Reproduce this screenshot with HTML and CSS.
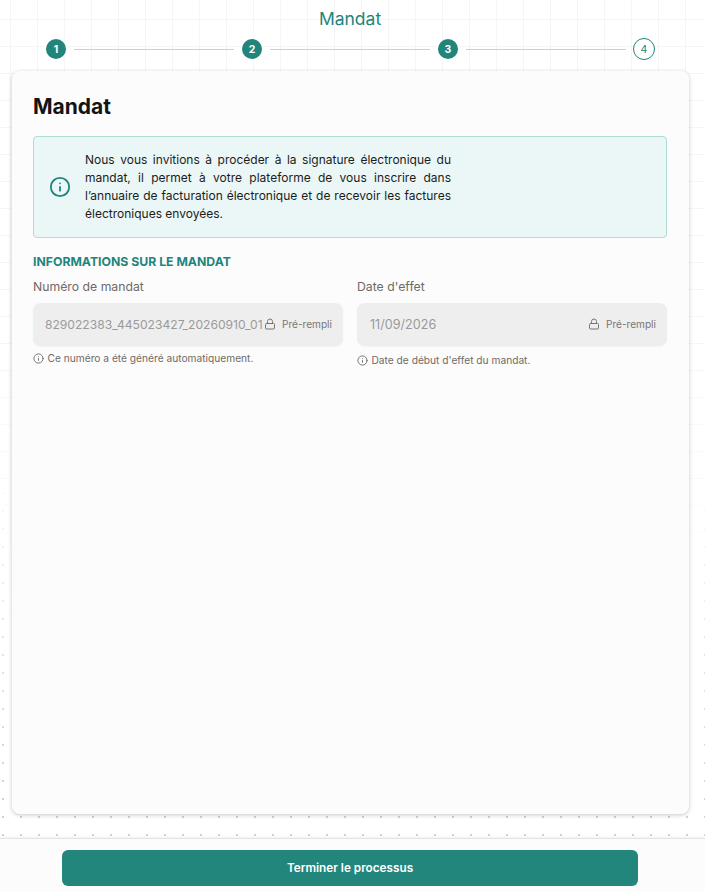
FILE: index.html
```html
<!DOCTYPE html>
<html lang="fr">
<head>
<meta charset="utf-8">
<title>Mandat</title>
<link rel="stylesheet" href="styles.css">
</head>
<body>
<div class="page">
  <div class="bg-grid"></div>
  <div class="bg-dots"></div>
  <header class="top">
    <div class="top-title">Mandat</div>
    <ol class="steps">
      <li class="step done">1</li>
      <li class="line"></li>
      <li class="step done">2</li>
      <li class="line"></li>
      <li class="step done">3</li>
      <li class="line"></li>
      <li class="step current">4</li>
    </ol>
  </header>
  <main class="card">
    <h1 class="card-title">Mandat</h1>
    <div class="notice">
      <svg class="notice-icon" viewBox="0 0 24 24" fill="none" stroke="currentColor" stroke-width="2" stroke-linecap="round"><circle cx="12" cy="12" r="10"/><path d="M12 16v-4M12 8h.01"/></svg>
      <p class="notice-text">Nous vous invitions à procéder à la signature électronique du mandat, il permet à votre plateforme de vous inscrire dans l’annuaire de facturation électronique et de recevoir les factures électroniques envoyées.</p>
    </div>
    <h2 class="section">INFORMATIONS SUR LE MANDAT</h2>
    <div class="fields">
      <div class="field">
        <label class="label">Numéro de mandat</label>
        <div class="input">
          <span class="value number">829022383_445023427_20260910_01</span>
          <span class="pre">
            <svg class="lock" viewBox="0 0 24 24" fill="none" stroke="currentColor" stroke-width="2" stroke-linecap="round" stroke-linejoin="round"><rect x="3" y="11" width="18" height="11" rx="2"/><path d="M7 11V7a5 5 0 0 1 10 0v4"/></svg>
            <span>Pré-rempli</span>
          </span>
        </div>
        <div class="help">
          <svg class="help-icon" viewBox="0 0 24 24" fill="none" stroke="currentColor" stroke-width="2" stroke-linecap="round"><circle cx="12" cy="12" r="10"/><path d="M12 16v-4M12 8h.01"/></svg>
          <span>Ce numéro a été généré automatiquement.</span>
        </div>
      </div>
      <div class="field">
        <label class="label">Date d'effet</label>
        <div class="input">
          <span class="value date">11/09/2026</span>
          <span class="pre">
            <svg class="lock" viewBox="0 0 24 24" fill="none" stroke="currentColor" stroke-width="2" stroke-linecap="round" stroke-linejoin="round"><rect x="3" y="11" width="18" height="11" rx="2"/><path d="M7 11V7a5 5 0 0 1 10 0v4"/></svg>
            <span>Pré-rempli</span>
          </span>
        </div>
        <div class="help help-low">
          <svg class="help-icon" viewBox="0 0 24 24" fill="none" stroke="currentColor" stroke-width="2" stroke-linecap="round"><circle cx="12" cy="12" r="10"/><path d="M12 16v-4M12 8h.01"/></svg>
          <span>Date de début d'effet du mandat.</span>
        </div>
      </div>
    </div>
  </main>
  <footer class="bottom">
    <button class="finish" type="button">Terminer le processus</button>
  </footer>
</div>
</body>
</html>
```

FILE: styles.css
```css
* { box-sizing: border-box; }
html, body { margin: 0; padding: 0; height: 100%; overflow: hidden; }
body { font-family: Inter, "Liberation Sans", sans-serif; background: #fff; color: #111; }
.page { position: relative; width: 705px; height: 892px; display: flex; flex-direction: column; overflow: hidden; }
.bg-grid {
  position: absolute; left: 0; top: 0; width: 100%; height: 640px;
  background-image: linear-gradient(to right, #f5f5f5 1px, transparent 1px), linear-gradient(to bottom, #f5f5f5 1px, transparent 1px);
  background-size: 27px 27px;
  background-position: 10px 19px;
  -webkit-mask-image: linear-gradient(to bottom, #000 0, #000 300px, transparent 630px);
  mask-image: linear-gradient(to bottom, #000 0, #000 300px, transparent 630px);
}
.bg-dots {
  position: absolute; left: 0; top: 440px; width: 100%; height: 452px;
  background-image: radial-gradient(circle at 1px 1px, #d2d2d2 1px, transparent 1.3px);
  background-size: 18px 18px;
  background-position: 2px 16px;
  -webkit-mask-image: linear-gradient(to bottom, transparent 0, #000 360px);
  mask-image: linear-gradient(to bottom, transparent 0, #000 360px);
}
.top { position: relative; height: 71px; flex: none; }
.top-title { width: 700px; text-align: center; color: #22857c; font-size: 17.5px; line-height: 20px; padding-top: 9px; }
.steps { list-style: none; margin: 9px 0 0; padding: 0 0 0 46px; display: flex; align-items: center; }
.step { width: 20px; height: 20px; border-radius: 50%; display: flex; align-items: center; justify-content: center; font-size: 10.5px; flex: none; }
.step.done { background: #22857c; color: #fff; font-weight: 700; }
.step.current { width: 22px; height: 22px; margin-left: -1px; background: #fff; border: 1px solid #22857c; color: #22857c; font-weight: 400; }
.line { flex: none; width: 160px; height: 1px; background: #cfcfcf; margin: 0 8px; }
.card {
  position: relative; margin: 0 16px 0 12px; height: 743px; flex: none;
  background: #fcfcfc; border-radius: 8px; padding: 21px 22px 21px 21px; box-shadow: 0 1px 4px rgba(0,0,0,.22);
}
.card-title { margin: 0; font-size: 21px; line-height: 30px; font-weight: 700; color: #141414; }
.notice {
  margin-top: 14px; height: 102px; background: #eaf7f6; border: 1px solid #b1dbd6; border-radius: 4px;
  display: flex; align-items: center; padding-left: 15px;
}
.notice-icon { width: 22px; height: 22px; color: #22857c; flex: none; }
.notice-text { margin: 0 0 0 14px; width: 366px; font-size: 12px; line-height: 18px; text-align: justify; color: #1c1c1c; }
.section { margin: 16px 0 0; font-size: 12.25px; line-height: 16px; font-weight: 700; color: #22857c; }
.fields { display: grid; grid-template-columns: 310px 310px; column-gap: 14px; margin-top: 8px; }
.label { display: block; font-size: 12.25px; line-height: 18px; color: #6f6a66; }
.input {
  margin-top: 7px; height: 43px; background: #eeeeee; border-radius: 8px;
  display: flex; align-items: center; justify-content: space-between; padding: 0 11px 0 12px;
  box-shadow: 0 1px 2px rgba(0,0,0,.04);
}
.value { color: #9a9a9a; white-space: nowrap; }
.number { font-size: 12.1px; }
.date { font-size: 12.6px; margin-left: 1px; }
.pre { display: flex; align-items: center; gap: 6px; font-size: 10.1px; color: #7a7572; flex: none; padding-bottom: 2px; }
.lock { width: 12px; height: 12px; color: #7a7572; }
.help { display: flex; align-items: center; gap: 3.5px; margin-top: 5px; font-size: 10.2px; line-height: 14px; color: #6f6a66; }
.help-low { margin-top: 7px; }
.help-icon { width: 11px; height: 11px; flex: none; }
.bottom {
  position: relative; flex: 1; margin-top: 24px; background: #fcfcfc; border-top: 1px solid #e4e4e4;
  box-shadow: 0 -1px 3px rgba(0,0,0,.06); display: flex; justify-content: center; padding: 11px 5px 0 0;
}
.finish {
  width: 576px; height: 36px; border: 0; border-radius: 6px; background: #23867d; color: #fff;
  font-family: inherit; font-size: 11.75px; font-weight: 600; padding-bottom: 2px;
}
```
